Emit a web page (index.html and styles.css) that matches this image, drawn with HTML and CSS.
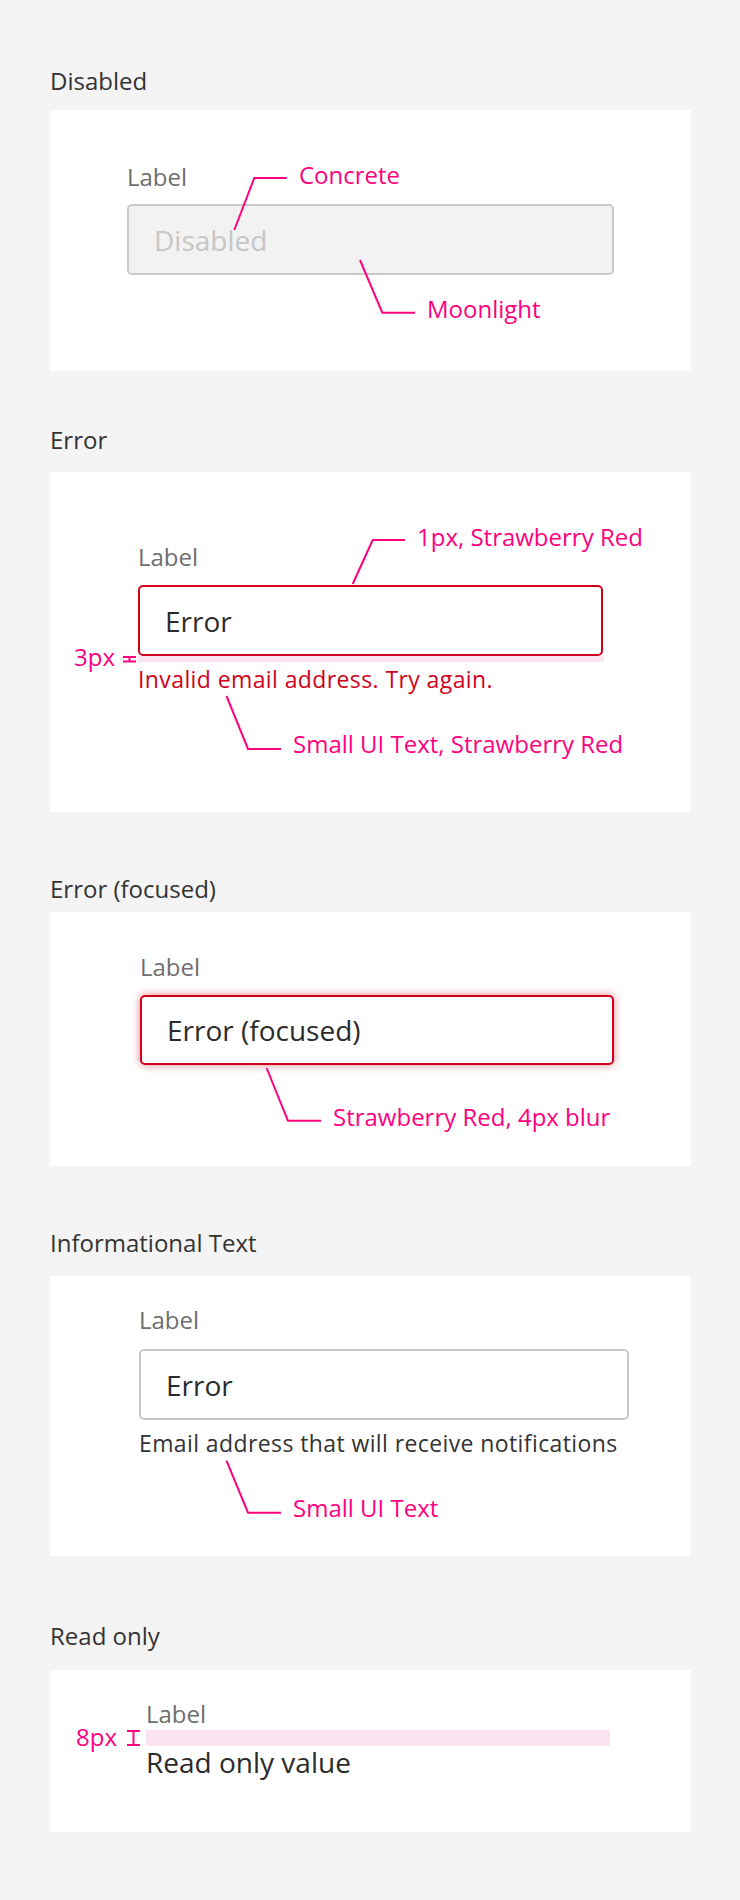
FILE: index.html
```html
<!DOCTYPE html>
<html lang="en">
<head>
<meta charset="utf-8">
<title>Text input states</title>
<link rel="stylesheet" href="styles.css">
</head>
<body>
<main class="page">

  <section class="section s1">
    <h2 class="heading">Disabled</h2>
    <div class="card card-1">
      <div class="field">
        <div class="label">Label</div>
        <div class="input input-disabled">Disabled</div>
      </div>
      <svg class="leaders" xmlns="http://www.w3.org/2000/svg">
        <polyline points="236.7,68 204.3,68 184.3,120" />
        <polyline points="310,150 332.3,202.7 365,202.7" />
      </svg>
      <span class="note note-concrete">Concrete</span>
      <span class="note note-moonlight">Moonlight</span>
    </div>
  </section>

  <section class="section s2">
    <h2 class="heading">Error</h2>
    <div class="card card-2">
      <div class="field">
        <div class="label">Label</div>
        <div class="input input-error">Error</div>
        <div class="spacer spacer-3"></div>
        <div class="message message-error">Invalid email address. Try again.</div>
      </div>
      <svg class="leaders" xmlns="http://www.w3.org/2000/svg">
        <polyline points="302.7,112 322.7,68 355,68" />
        <polyline points="176.5,224 198,277 231,277" />
        <line x1="73" y1="185" x2="86" y2="185" />
        <line x1="73" y1="189.5" x2="86" y2="189.5" />
        <line x1="79.5" y1="185" x2="79.5" y2="189.5" />
      </svg>
      <span class="note note-1px">1px, Strawberry Red</span>
      <span class="note note-3px">3px</span>
      <span class="note note-small-red">Small UI Text, Strawberry Red</span>
    </div>
  </section>

  <section class="section s3">
    <h2 class="heading">Error (focused)</h2>
    <div class="card card-3">
      <div class="field">
        <div class="label">Label</div>
        <div class="input input-error input-focused">Error (focused)</div>
      </div>
      <svg class="leaders" xmlns="http://www.w3.org/2000/svg">
        <polyline points="216.6,156 237.9,208.7 271,208.7" />
      </svg>
      <span class="note note-blur">Strawberry Red, 4px blur</span>
    </div>
  </section>

  <section class="section s4">
    <h2 class="heading">Informational Text</h2>
    <div class="card card-4">
      <div class="field">
        <div class="label">Label</div>
        <div class="input">Error</div>
        <div class="message message-info">Email address that will receive notifications</div>
      </div>
      <svg class="leaders" xmlns="http://www.w3.org/2000/svg">
        <polyline points="176.5,184.7 198,236.7 231,236.7" />
      </svg>
      <span class="note note-small">Small UI Text</span>
    </div>
  </section>

  <section class="section s5">
    <h2 class="heading">Read only</h2>
    <div class="card card-5">
      <div class="field">
        <div class="label">Label</div>
        <div class="spacer spacer-8"></div>
        <div class="readonly-value">Read only value</div>
      </div>
      <svg class="leaders" xmlns="http://www.w3.org/2000/svg">
        <line x1="77" y1="61" x2="90" y2="61" />
        <line x1="77" y1="75" x2="90" y2="75" />
        <line x1="83.5" y1="61" x2="83.5" y2="75" />
      </svg>
      <span class="note note-8px">8px</span>
    </div>
  </section>

</main>
</body>
</html>
```

FILE: styles.css
```css
html, body {
  margin: 0;
  padding: 0;
}

body {
  background: #f4f4f4;
  font-family: "Open Sans", "Noto Sans", sans-serif;
  color: #333333;
}

.page {
  padding: 65px 49px 68px 50px;
}

.heading {
  margin: 0;
  font-size: 24px;
  line-height: 32px;
  font-weight: 400;
  color: #333333;
}

.card {
  position: relative;
  background: #ffffff;
}

.field {
  display: flex;
  flex-direction: column;
  align-items: flex-start;
}

.label {
  font-size: 24px;
  line-height: 32px;
  color: #6e6e6e;
}

.input {
  box-sizing: border-box;
  height: 71px;
  display: flex;
  align-items: center;
  padding: 0 25px;
  border: 2px solid #c8c8c8;
  border-radius: 5px;
  background: #ffffff;
  font-size: 28px;
  color: #2b2b2b;
}

.input-disabled {
  background: #f2f2f2;
  color: #c6c6c6;
}

.input-error {
  border-color: #d0021b;
}

.input-focused {
  box-shadow: 0 0 8px rgba(208, 2, 27, 0.5);
}

.message {
  font-size: 23px;
  line-height: 28px;
  letter-spacing: 0.4px;
}

.message-error {
  color: #d0021b;
}

.message-info {
  color: #333333;
}

.spacer {
  background: #fbe3ef;
}

.readonly-value {
  font-size: 28px;
  line-height: 32px;
  color: #2b2b2b;
}

.leaders {
  position: absolute;
  left: 0;
  top: 0;
  width: 100%;
  height: 100%;
  pointer-events: none;
  overflow: visible;
}

.leaders polyline,
.leaders line {
  fill: none;
  stroke: #ff0080;
  stroke-width: 2;
}

.note {
  position: absolute;
  font-size: 24px;
  line-height: 32px;
  color: #ff0080;
  white-space: nowrap;
}

/* Section 1: Disabled */
.s1 .card {
  margin-top: 13px;
  padding: 51px 0 96px 77px;
}
.s1 .label { margin-bottom: 11px; }
.s1 .input { width: 487px; }
.note-concrete { left: 249px; top: 49px; }
.note-moonlight { left: 377px; top: 183px; }

/* Section 2: Error */
.s2 { margin-top: 53px; }
.s2 .card {
  margin-top: 16px;
  padding: 69px 0 119px 88px;
}
.s2 .label { margin-bottom: 12px; }
.s2 .input { width: 465px; }
.spacer-3 {
  width: 466px;
  height: 6px;
}
.s2 .message { margin-top: 3px; }
.note-1px { left: 367px; top: 49px; }
.note-3px { left: 24px; top: 169px; }
.note-small-red { left: 243px; top: 256px; }

/* Section 3: Error (focused) */
.s3 { margin-top: 61px; }
.s3 .card {
  margin-top: 7px;
  padding: 39px 0 101px 90px;
}
.s3 .label { margin-bottom: 12px; }
.s3 .input { width: 474px; height: 70px; }
.note-blur { left: 283px; top: 189px; }

/* Section 4: Informational Text */
.s4 { margin-top: 61px; }
.s4 .card {
  margin-top: 17px;
  padding: 28px 0 99px 89px;
}
.s4 .label { margin-bottom: 13px; }
.s4 .input { width: 490px; }
.s4 .message { margin-top: 9px; }
.note-small { left: 243px; top: 216px; }

/* Section 5: Read only */
.s5 { margin-top: 64px; }
.s5 .card {
  margin-top: 18px;
  padding: 28px 0 54px 96px;
}
.spacer-8 {
  width: 464px;
  height: 16px;
}
.note-8px { left: 26px; top: 51px; }
```
